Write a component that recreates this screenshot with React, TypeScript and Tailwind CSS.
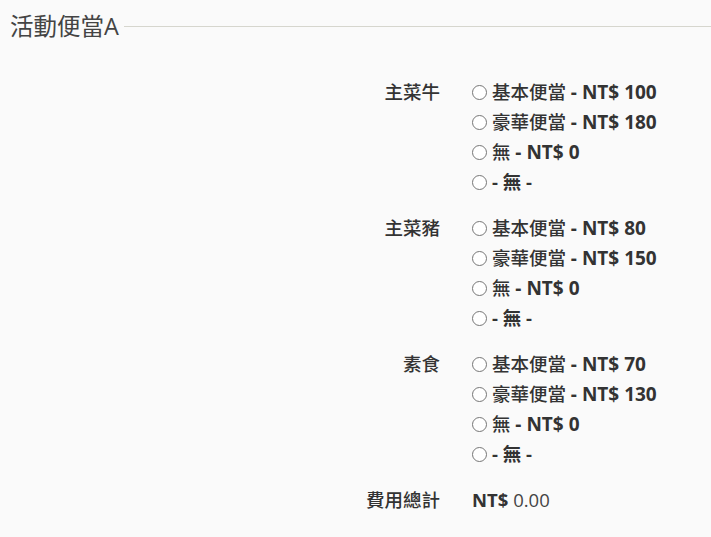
import React from 'react';

const groups = [
  {
    label: '主菜牛',
    options: [
      { name: '基本便當', price: 'NT$ 100' },
      { name: '豪華便當', price: 'NT$ 180' },
      { name: '無', price: 'NT$ 0' },
      { name: null, price: null },
    ],
  },
  {
    label: '主菜豬',
    options: [
      { name: '基本便當', price: 'NT$ 80' },
      { name: '豪華便當', price: 'NT$ 150' },
      { name: '無', price: 'NT$ 0' },
      { name: null, price: null },
    ],
  },
  {
    label: '素食',
    options: [
      { name: '基本便當', price: 'NT$ 70' },
      { name: '豪華便當', price: 'NT$ 130' },
      { name: '無', price: 'NT$ 0' },
      { name: null, price: null },
    ],
  },
];

const font = { fontFamily: '"Open Sans", "Noto Sans CJK TC", sans-serif' };

const Radio = () => (
  <span className="inline-block w-[15px] h-[15px] rounded-full border border-[#767676] bg-white mr-[5px] shrink-0" />
);

export default function App() {
  return (
    <div className="min-h-screen bg-[#fafafa] text-[#333]" style={font}>
      {/* Legend */}
      <div className="flex items-center pt-[11px] pl-[10px]">
        <span className="text-[23.5px] leading-[30px] text-[#444]">活動便當A</span>
        <div className="flex-1 h-px bg-[#d6d6ce] ml-[5px] mt-[1px]" />
      </div>

      <div className="grid grid-cols-[440px_1fr] gap-x-[32px] mt-[36px] text-[18.5px] leading-[30px]">
        {groups.map((g) => (
          <React.Fragment key={g.label}>
            <div className="text-right font-medium mb-[16px]">{g.label}</div>
            <div className="flex flex-col mb-[16px]">
              {g.options.map((o, i) => (
                <label key={i} className="flex items-center font-medium">
                  <Radio />
                  {o.name ? (
                    <span>
                      {o.name} <b className="font-bold text-[19px]">- {o.price}</b>
                    </span>
                  ) : (
                    <span className="font-bold">- 無 -</span>
                  )}
                </label>
              ))}
            </div>
          </React.Fragment>
        ))}
        <div className="text-right font-medium">費用總計</div>
        <div>
          <b className="font-bold">NT$</b> <span className="text-[#444]">0.00</span>
        </div>
      </div>
    </div>
  );
}
